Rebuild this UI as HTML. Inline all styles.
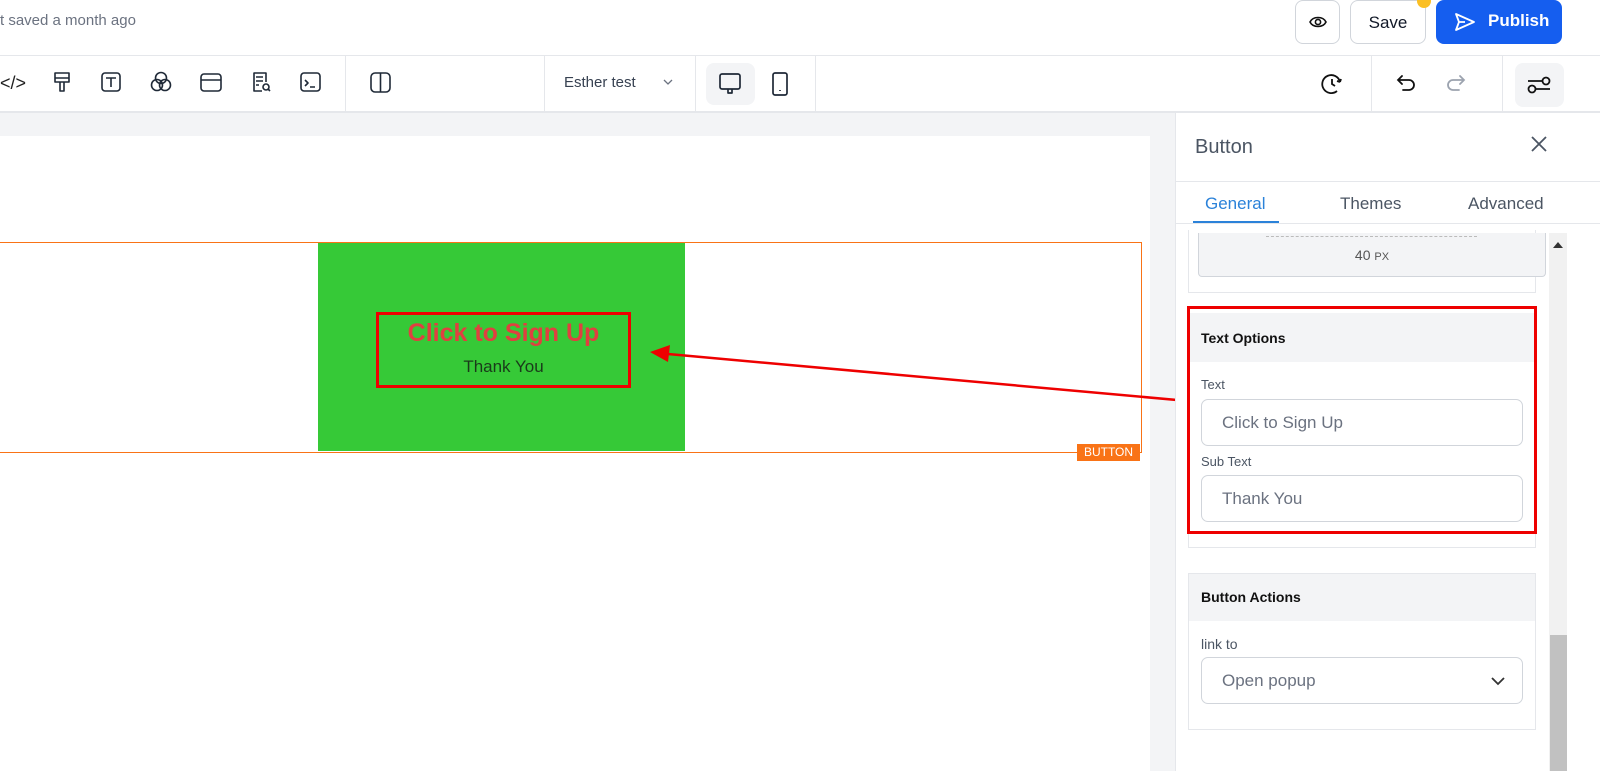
<!DOCTYPE html>
<html><head><style>
*{box-sizing:border-box;margin:0;padding:0}
body{width:1600px;height:771px;overflow:hidden;font-family:"Liberation Sans",sans-serif;background:#fff;position:relative;color:#111827}
.a{position:absolute}
svg{overflow:visible}
</style></head><body>
<!-- top bar -->
<div class="a" style="left:0;top:12px;font-size:15px;color:#6b7280">t saved a month ago</div>
<div class="a" style="left:1295px;top:0;width:45px;height:44px;border:1px solid #d1d5db;border-radius:8px"></div>
<svg class="a" style="left:1308px;top:13px" width="20" height="18" viewBox="0 0 20 18" fill="none" stroke="#111" stroke-width="1.6"><path d="M2 9C5 3 15 3 18 9C15 15 5 15 2 9Z"/><circle cx="10" cy="9" r="2.6"/></svg>
<div class="a" style="left:1350px;top:0;width:76px;height:44px;border:1px solid #d1d5db;border-radius:8px;font-size:17px;text-align:center;line-height:43px">Save</div>
<div class="a" style="left:1417px;top:-6px;width:14px;height:14px;border-radius:50%;background:#fbbf24"></div>
<div class="a" style="left:1436px;top:0;width:126px;height:44px;background:#155eef;border-radius:8px;color:#fff;font-weight:bold;font-size:17px;line-height:42px;padding-left:52px">Publish</div>
<svg class="a" style="left:1454px;top:11px" width="22" height="22" viewBox="0 0 22 22" fill="none" stroke="#fff" stroke-width="1.8" stroke-linejoin="round"><path d="M2 3L20 11L2 19L5 11Z M5 11H11"/></svg>
<div class="a" style="left:0;top:55px;width:1600px;height:1px;background:#e5e7eb"></div>
<!-- toolbar -->
<div class="a" style="left:0;top:73px;font-size:18px;color:#222">&lt;/&gt;</div>
<svg class="a" style="left:0;top:70px" width="400" height="26" fill="none" stroke="#1f2937" stroke-width="1.6" stroke-linejoin="round">
<path d="M55 3h14v9h-14z M55 8h14 M60 12v9h4v-9"/>
<rect x="102" y="3" width="18" height="18" rx="3"/><path d="M106 8h10 M111 8v9"/>
<circle cx="161" cy="8" r="5.5"/><circle cx="157" cy="15" r="5.5"/><circle cx="165" cy="15" r="5.5"/>
<rect x="201" y="4" width="20" height="17" rx="3"/><path d="M201 10h20"/>
<path d="M262 21h-8v-18h12v9 M256 7h7 M256 11h7 M256 15h3"/><circle cx="266" cy="17" r="3"/><path d="M268 19l2 2"/>
<rect x="301" y="3" width="19" height="18" rx="3"/><path d="M305 10l3 3-3 3 M310 17h5"/>
<rect x="371" y="3" width="19" height="19" rx="4"/><path d="M380.5 3v19"/>
</svg>
<div class="a" style="left:345px;top:56px;width:1px;height:56px;background:#e5e7eb"></div>
<div class="a" style="left:544px;top:56px;width:1px;height:56px;background:#e5e7eb"></div>
<div class="a" style="left:564px;top:74px;font-size:15px;color:#374151">Esther test</div>
<svg class="a" style="left:662px;top:78px" width="12" height="8" fill="none" stroke="#6b7280" stroke-width="1.3"><path d="M2 2l4 4 4-4"/></svg>
<div class="a" style="left:695px;top:56px;width:1px;height:56px;background:#e5e7eb"></div>
<div class="a" style="left:706px;top:63px;width:49px;height:42px;background:#f3f4f6;border-radius:8px"></div>
<svg class="a" style="left:718px;top:72px" width="60" height="26" fill="none" stroke="#1f2937" stroke-width="1.7" stroke-linejoin="round"><rect x="2" y="2" width="20" height="15" rx="2"/><path d="M10 17v4h4v-4"/><rect x="55" y="1" width="14" height="22" rx="2"/><path d="M62 18v1"/></svg>
<div class="a" style="left:815px;top:56px;width:1px;height:56px;background:#e5e7eb"></div>
<svg class="a" style="left:1320px;top:72px" width="24" height="24" fill="none" stroke="#111" stroke-width="1.8"><path d="M20 10A9 9 0 1 0 17 19 M12 7v5l3 2 M20 10l1-3 M20 10l-3-1"/></svg>
<div class="a" style="left:1371px;top:56px;width:1px;height:56px;background:#e5e7eb"></div>
<svg class="a" style="left:1395px;top:72px" width="80" height="24" fill="none" stroke-width="1.8" stroke-linecap="round"><path stroke="#111" d="M7 4L3 8l4 4 M3 8h11a5 5 0 0 1 0 10H8"/><path stroke="#9ca3af" d="M65 4l4 4-4 4 M69 8H58a5 5 0 0 0 0 10h6"/></svg>
<div class="a" style="left:1502px;top:56px;width:1px;height:56px;background:#e5e7eb"></div>
<div class="a" style="left:1515px;top:63px;width:49px;height:44px;background:#f3f4f6;border-radius:8px"></div>
<svg class="a" style="left:1526px;top:73px" width="26" height="22" fill="none" stroke="#111" stroke-width="1.8"><path d="M2 8h14 M10 16h14"/><circle cx="20" cy="8" r="3.5" fill="#f3f4f6"/><circle cx="6" cy="16" r="3.5" fill="#f3f4f6"/></svg>
<div class="a" style="left:0;top:111px;width:1600px;height:2px;background:#e5e7eb"></div>
<!-- canvas -->
<div class="a" style="left:0;top:113px;width:1175px;height:658px;background:#f3f4f6"></div>
<div class="a" style="left:0;top:136px;width:1150px;height:635px;background:#fff"></div>
<div class="a" style="left:-2px;top:242px;width:1144px;height:211px;border:1.5px solid #f97316"></div>
<div class="a" style="left:318px;top:243px;width:367px;height:208px;background:#36c937"></div>
<div class="a" style="left:1077px;top:444px;width:63px;height:17px;background:#f97316;color:#fff;font-size:12px;text-align:center;line-height:17px">BUTTON</div>
<div class="a" style="left:376px;top:312px;width:255px;height:76px;border:3px solid #ee0000"></div>
<div class="a" style="left:376px;top:319px;width:255px;text-align:center;font-weight:bold;font-size:25px;color:#e04040">Click to Sign Up</div>
<div class="a" style="left:376px;top:357px;width:255px;text-align:center;font-size:17px;color:#1a3a1a">Thank You</div>
<svg class="a" style="left:0;top:0" width="1600" height="771"><line x1="1188" y1="401" x2="668" y2="354" stroke="#ee0000" stroke-width="2.5"/><path d="M650 352L670 345L668 362Z" fill="#ee0000"/></svg>
<!-- panel -->
<div class="a" style="left:1175px;top:113px;width:425px;height:658px;background:#fff;border-left:1px solid #e5e7eb"></div>
<div class="a" style="left:1195px;top:136px;font-size:20px;color:#4b5563">Button</div>
<svg class="a" style="left:1531px;top:136px" width="16" height="16" stroke="#4b5563" stroke-width="1.8"><path d="M1 1l14 14M15 1L1 15"/></svg>
<div class="a" style="left:1175px;top:181px;width:425px;height:1px;background:#e5e7eb"></div>
<div class="a" style="left:1205px;top:194px;font-size:17px;color:#2b82d9">General</div>
<div class="a" style="left:1340px;top:194px;font-size:17px;color:#4b5563">Themes</div>
<div class="a" style="left:1468px;top:194px;font-size:17px;color:#4b5563">Advanced</div>
<div class="a" style="left:1175px;top:223px;width:425px;height:1px;background:#e5e7eb"></div>
<div class="a" style="left:1193px;top:221px;width:86px;height:2px;background:#2b82d9"></div>
<div class="a" style="left:1188px;top:230px;width:348px;height:63px;border:1px solid #e5e7eb;border-top:none"></div>
<div class="a" style="left:1198px;top:233px;width:348px;height:44px;background:#f3f4f6;border:1px solid #d1d5db;border-top:none;border-radius:0 0 4px 4px;text-align:center;font-size:14px;color:#555;padding-top:14px">40 <span style="font-size:11px">PX</span></div>
<div class="a" style="left:1266px;top:236px;width:211px;border-top:1px dashed #bbb"></div>
<div class="a" style="left:1549px;top:233px;width:18px;height:538px;background:#f1f1f1"></div>
<div class="a" style="left:1550px;top:635px;width:17px;height:136px;background:#c1c1c1"></div>
<svg class="a" style="left:1553px;top:242px" width="10" height="6"><path d="M0 6L5 0L10 6Z" fill="#333"/></svg>
<!-- text options -->
<div class="a" style="left:1188px;top:313px;width:348px;height:235px;border:1px solid #e5e7eb"></div>
<div class="a" style="left:1188px;top:313px;width:348px;height:49px;background:#f3f4f6"></div>
<div class="a" style="left:1201px;top:330px;font-size:14px;font-weight:bold;color:#111">Text Options</div>
<div class="a" style="left:1201px;top:377px;font-size:13px;color:#4b5563">Text</div>
<div class="a" style="left:1201px;top:399px;width:322px;height:47px;border:1px solid #d1d5db;border-radius:7px;font-size:17px;color:#6b7280;padding:13px 0 0 20px">Click to Sign Up</div>
<div class="a" style="left:1201px;top:454px;font-size:13px;color:#4b5563">Sub Text</div>
<div class="a" style="left:1201px;top:475px;width:322px;height:47px;border:1px solid #d1d5db;border-radius:7px;font-size:17px;color:#6b7280;padding:13px 0 0 20px">Thank You</div>
<div class="a" style="left:1187px;top:306px;width:350px;height:228px;border:3px solid #ee0000"></div>
<!-- actions -->
<div class="a" style="left:1188px;top:573px;width:348px;height:157px;border:1px solid #e5e7eb"></div>
<div class="a" style="left:1189px;top:574px;width:346px;height:47px;background:#f3f4f6"></div>
<div class="a" style="left:1201px;top:589px;font-size:14px;font-weight:bold;color:#111">Button Actions</div>
<div class="a" style="left:1201px;top:636px;font-size:14px;color:#4b5563">link to</div>
<div class="a" style="left:1201px;top:657px;width:322px;height:47px;border:1px solid #d1d5db;border-radius:7px;font-size:17px;color:#6b7280;padding:13px 0 0 20px">Open popup</div>
<svg class="a" style="left:1491px;top:677px" width="14" height="9" fill="none" stroke="#333" stroke-width="1.8"><path d="M1 1l6 6 6-6"/></svg>
</body></html>
